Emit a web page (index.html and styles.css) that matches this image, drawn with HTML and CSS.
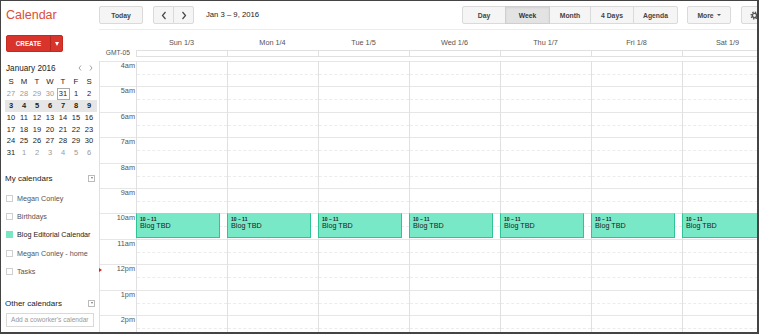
FILE: index.html
```html
<!DOCTYPE html>
<html>
<head>
<meta charset="utf-8">
<link rel="stylesheet" href="styles.css">
</head>
<body>
<div class="frame">
  <header class="topbar">
    <div class="brand">Calendar</div>
    <div class="toolbar">
      <div class="btn today">Today</div>
      <div class="group nav">
        <div class="btn nav-btn"><svg width="6" height="9" viewBox="0 0 6 9"><polyline points="4.5,1 1.5,4.5 4.5,8" fill="none" stroke="#444" stroke-width="1.2"/></svg></div>
        <div class="btn nav-btn"><svg width="6" height="9" viewBox="0 0 6 9"><polyline points="1.5,1 4.5,4.5 1.5,8" fill="none" stroke="#444" stroke-width="1.2"/></svg></div>
      </div>
      <div class="range">Jan 3 – 9, 2016</div>
      <div class="spacer"></div>
      <div class="group views">
        <div class="btn v-day">Day</div>
        <div class="btn v-week active">Week</div>
        <div class="btn v-month">Month</div>
        <div class="btn v-4d">4 Days</div>
        <div class="btn v-agenda">Agenda</div>
      </div>
      <div class="btn more">More <span class="caret"></span></div>
      <div class="btn settings"><svg width="9" height="9" viewBox="0 0 16 16"><circle cx="8" cy="8" r="5.6" fill="none" stroke="#555" stroke-width="3.2" stroke-dasharray="2.2 2.2"/><circle cx="8" cy="8" r="3.8" fill="none" stroke="#555" stroke-width="2.6"/></svg></div>
    </div>
  </header>
  <div class="content">
    <aside class="sidebar">
      <div class="create"><div class="create-label">CREATE</div><div class="create-drop"><span class="tri"></span></div></div>

      <div class="mini">
        <div class="mini-title">
          <span>January 2016</span>
          <span class="mini-arrows">
            <svg width="4" height="6" viewBox="0 0 4 6"><polyline points="3,0.5 1,3 3,5.5" fill="none" stroke="#999" stroke-width="0.9"/></svg>
            <svg width="4" height="6" viewBox="0 0 4 6"><polyline points="1,0.5 3,3 1,5.5" fill="none" stroke="#999" stroke-width="0.9"/></svg>
          </span>
        </div>
        <div class="week head"><span>S</span><span>M</span><span>T</span><span>W</span><span>T</span><span>F</span><span>S</span></div>
        <div class="week"><span class="o">27</span><span class="o">28</span><span class="o">29</span><span class="o">30</span><span class="today-box">31</span><span>1</span><span>2</span></div>
        <div class="week cur"><span>3</span><span>4</span><span>5</span><span>6</span><span>7</span><span>8</span><span>9</span></div>
        <div class="week"><span>10</span><span>11</span><span>12</span><span>13</span><span>14</span><span>15</span><span>16</span></div>
        <div class="week"><span>17</span><span>18</span><span>19</span><span>20</span><span>21</span><span>22</span><span>23</span></div>
        <div class="week"><span>24</span><span>25</span><span>26</span><span>27</span><span>28</span><span>29</span><span>30</span></div>
        <div class="week"><span>31</span><span class="o">1</span><span class="o">2</span><span class="o">3</span><span class="o">4</span><span class="o">5</span><span class="o">6</span></div>
      </div>

      <div class="sec"><span>My calendars</span><span class="dd"></span></div>
      <div class="cal-list">
        <div class="cal-item"><span class="chk"></span>Megan Conley</div>
        <div class="cal-item"><span class="chk"></span>Birthdays</div>
        <div class="cal-item sel"><span class="chk on"></span>Blog Editorial Calendar</div>
        <div class="cal-item"><span class="chk"></span>Megan Conley - home</div>
        <div class="cal-item"><span class="chk"></span>Tasks</div>
      </div>

      <div class="sec other"><span>Other calendars</span><span class="dd"></span></div>
      <div class="add">Add a coworker's calendar</div>
    </aside>

    <main class="main">
      <div class="dayhead">
        <div class="gutter"></div>
        <div class="dname">Sun 1/3</div>
        <div class="dname">Mon 1/4</div>
        <div class="dname">Tue 1/5</div>
        <div class="dname">Wed 1/6</div>
        <div class="dname">Thu 1/7</div>
        <div class="dname">Fri 1/8</div>
        <div class="dname">Sat 1/9</div>
      </div>
      <div class="allday">
        <div class="tz">GMT-05</div>
        <div class="adbox">
          <div class="adcell"></div><div class="adcell"></div><div class="adcell"></div><div class="adcell"></div><div class="adcell"></div><div class="adcell"></div><div class="adcell"></div>
        </div>
      </div>
      <div class="grid">
        <div class="times">
          <div class="hl">4am</div>
          <div class="hl">5am</div>
          <div class="hl">6am</div>
          <div class="hl">7am</div>
          <div class="hl">8am</div>
          <div class="hl">9am</div>
          <div class="hl">10am</div>
          <div class="hl">11am</div>
          <div class="hl">12pm<span class="now"></span></div>
          <div class="hl">1pm</div>
          <div class="hl">2pm</div>
        </div>
        <div class="day"><div class="slot"></div><div class="slot"></div><div class="slot"></div><div class="slot"></div><div class="slot"></div><div class="slot"></div><div class="slot"><div class="event"><div class="ev-time">10 – 11</div><div class="ev-title">Blog TBD</div></div></div><div class="slot"></div><div class="slot"></div><div class="slot"></div><div class="slot"></div></div>
        <div class="day"><div class="slot"></div><div class="slot"></div><div class="slot"></div><div class="slot"></div><div class="slot"></div><div class="slot"></div><div class="slot"><div class="event"><div class="ev-time">10 – 11</div><div class="ev-title">Blog TBD</div></div></div><div class="slot"></div><div class="slot"></div><div class="slot"></div><div class="slot"></div></div>
        <div class="day"><div class="slot"></div><div class="slot"></div><div class="slot"></div><div class="slot"></div><div class="slot"></div><div class="slot"></div><div class="slot"><div class="event"><div class="ev-time">10 – 11</div><div class="ev-title">Blog TBD</div></div></div><div class="slot"></div><div class="slot"></div><div class="slot"></div><div class="slot"></div></div>
        <div class="day"><div class="slot"></div><div class="slot"></div><div class="slot"></div><div class="slot"></div><div class="slot"></div><div class="slot"></div><div class="slot"><div class="event"><div class="ev-time">10 – 11</div><div class="ev-title">Blog TBD</div></div></div><div class="slot"></div><div class="slot"></div><div class="slot"></div><div class="slot"></div></div>
        <div class="day"><div class="slot"></div><div class="slot"></div><div class="slot"></div><div class="slot"></div><div class="slot"></div><div class="slot"></div><div class="slot"><div class="event"><div class="ev-time">10 – 11</div><div class="ev-title">Blog TBD</div></div></div><div class="slot"></div><div class="slot"></div><div class="slot"></div><div class="slot"></div></div>
        <div class="day"><div class="slot"></div><div class="slot"></div><div class="slot"></div><div class="slot"></div><div class="slot"></div><div class="slot"></div><div class="slot"><div class="event"><div class="ev-time">10 – 11</div><div class="ev-title">Blog TBD</div></div></div><div class="slot"></div><div class="slot"></div><div class="slot"></div><div class="slot"></div></div>
        <div class="day"><div class="slot"></div><div class="slot"></div><div class="slot"></div><div class="slot"></div><div class="slot"></div><div class="slot"></div><div class="slot"><div class="event"><div class="ev-time">10 – 11</div><div class="ev-title">Blog TBD</div></div></div><div class="slot"></div><div class="slot"></div><div class="slot"></div><div class="slot"></div></div>
      </div>
    </main>
  </div>
</div>
</body>
</html>
```

FILE: styles.css
```css
* { box-sizing: border-box; }
html, body { margin: 0; padding: 0; background: #fff; }
body { font-family: "Liberation Sans", Arial, sans-serif; color: #222; }

.frame {
  width: 759px;
  height: 334px;
  border: 1px solid #444;
  border-right-width: 2px;
  border-bottom-width: 2px;
  overflow: hidden;
  display: flex;
  flex-direction: column;
}

/* top bar */
.topbar { display: flex; height: 29px; flex-shrink: 0; }
.brand {
  width: 98px; flex-shrink: 0;
  padding-left: 5px;
  font-size: 12.5px; line-height: 29px;
  color: #dd4b39;
}
.toolbar {
  width: 671px; flex-shrink: 0;
  display: flex; align-items: flex-start;
  padding-top: 5px;
  border-bottom: 1px solid #ececec;
}
.btn {
  height: 18px;
  border: 1px solid #dadada;
  background: #f5f5f5;
  border-radius: 2px;
  font-size: 6.8px; font-weight: bold; color: #444;
  display: flex; align-items: center; justify-content: center;
  flex-shrink: 0;
}
.today { width: 44px; }
.group { display: flex; flex-shrink: 0; }
.group .btn + .btn { margin-left: -1px; }
.group .btn { border-radius: 0; }
.group .btn:first-child { border-radius: 2px 0 0 2px; }
.group .btn:last-child { border-radius: 0 2px 2px 0; }
.nav { margin-left: 10px; }
.nav-btn { width: 21px; }
.range { margin-left: 12px; font-size: 7.7px; line-height: 18px; color: #222; white-space: nowrap; }
.spacer { flex: 1; }
.v-day { width: 44px; }
.v-week { width: 45px; }
.v-month { width: 42px; }
.v-4d { width: 44px; }
.v-agenda { width: 45px; }
.btn.active { background: #e3e3e3; border-color: #cfcfcf; box-shadow: inset 0 1px 2px rgba(0,0,0,0.08); color: #333; position: relative; z-index: 1; }
.more { margin-left: 9px; width: 44px; }
.caret {
  display: inline-block; margin-left: 3px;
  border-left: 2px solid transparent; border-right: 2px solid transparent;
  border-top: 2.5px solid #555;
}
.settings { margin-left: 10px; width: 29px; justify-content: flex-start; padding-left: 8px; }

/* content */
.content { display: flex; flex: 1; min-height: 0; }
.sidebar { width: 98px; flex-shrink: 0; }

.create {
  margin: 5px 0 0 5px;
  width: 57px; height: 17px;
  display: flex;
  background: #d9342b;
  border: 1px solid #c4291f;
  border-radius: 2px;
}
.create-label {
  width: 43px;
  color: #fff; font-size: 6.3px; font-weight: bold;
  display: flex; align-items: center; justify-content: center;
}
.create-drop {
  flex: 1;
  border-left: 1px solid #b3261c;
  display: flex; align-items: center; justify-content: center;
}
.tri {
  border-left: 2.5px solid transparent; border-right: 2.5px solid transparent;
  border-top: 4px solid #fff;
}

.mini { margin: 10px 0 0 3.5px; width: 92px; }
.mini-title {
  display: flex; align-items: center; justify-content: space-between;
  height: 12px;
  font-size: 8.2px; color: #222;
  padding-left: 1.5px; padding-right: 4px;
}
.mini-arrows { display: flex; gap: 7px; }
.week { display: flex; height: 11.85px; font-size: 7.5px; color: #222; }
.week span { width: 13px; text-align: center; line-height: 11.85px; }
.week.head { height: 12px; margin-top: 2px; font-size: 7.8px; }
.week.head span { line-height: 12px; }
.week .o { color: #9a9a9a; }
.week.cur { background: #e6e6e6; font-weight: bold; }
.week .today-box { border: 1px solid #aaa; line-height: 9.85px; }

.sec {
  display: flex; align-items: center; justify-content: space-between;
  height: 12px; width: 90px;
  margin: 13px 0 0 4px;
  font-size: 8px; color: #222;
}
.sec.other { margin-top: 16.5px; }
.dd { width: 7px; height: 7px; border: 1px solid #bbb; display: flex; align-items: center; justify-content: center; }
.dd::after {
  content: "";
  border-left: 1.5px solid transparent; border-right: 1.5px solid transparent;
  border-top: 2px solid #777;
}
.cal-list { margin-top: 5px; }
.cal-item {
  display: flex; align-items: center;
  height: 18.3px;
  padding-left: 5px;
  font-size: 7.2px; color: #555;
  white-space: nowrap;
}
.cal-item.sel { color: #222; }
.chk { width: 7px; height: 7px; border: 1px solid #cfcfcf; margin-right: 4px; flex-shrink: 0; }
.chk.on { background: #79e6c4; border-color: #79e6c4; }
.add {
  margin: 4px 0 0 5px;
  width: 88px; height: 14px;
  border: 1px solid #d9d9d9;
  font-size: 6.6px; color: #999;
  padding-left: 4px; line-height: 12px;
  white-space: nowrap;
}

/* main */
.main { width: 674px; flex-shrink: 0; display: flex; flex-direction: column; }
.dayhead { display: flex; height: 20px; flex-shrink: 0; }
.gutter { width: 37px; flex-shrink: 0; }
.dname {
  width: 91px; flex-shrink: 0;
  text-align: center;
  font-size: 7.3px; color: #555;
  padding-top: 9px; line-height: 8px;
}
.allday { display: flex; height: 11px; flex-shrink: 0; }
.tz {
  width: 37px; flex-shrink: 0;
  text-align: right; padding-right: 6px;
  font-size: 6.7px; color: #555; line-height: 6px;
}
.adbox { display: flex; height: 7px; border-top: 1px solid #e0e0e0; border-bottom: 1px solid #e0e0e0; }
.adcell { width: 91px; border-left: 1px solid #e0e0e0; }

.grid { display: flex; }
.times { width: 37px; flex-shrink: 0; border-left: 1px solid #e0e0e0; }
.hl {
  height: 25.4px;
  border-top: 1px solid #e6e6e6;
  text-align: right; padding-right: 1px;
  font-size: 7.3px; color: #555; line-height: 7px;
  position: relative;
}
.now {
  position: absolute; left: -1px; top: 3px;
  border-left: 3px solid #e0201b;
  border-top: 2px solid transparent; border-bottom: 2px solid transparent;
}
.day { width: 91px; flex-shrink: 0; border-left: 1px solid #e0e0e0; }
.slot { height: 25.4px; border-top: 1px solid #e6e6e6; position: relative; }
.slot::after {
  content: ""; position: absolute; left: 0; right: 0; top: 12px;
  border-top: 1px dashed #ececec;
}
.event {
  position: absolute; z-index: 2;
  top: -1px; left: -1px;
  width: 84px; height: 25px;
  background: #79e8c6;
  border: 1px solid #2fc396;
  border-top-color: #79e8c6;
  padding: 1.5px 0 0 3px;
  color: #222;
}
.ev-time { font-size: 5px; font-weight: bold; line-height: 6px; }
.ev-title { font-size: 7.2px; line-height: 8px; }
```
